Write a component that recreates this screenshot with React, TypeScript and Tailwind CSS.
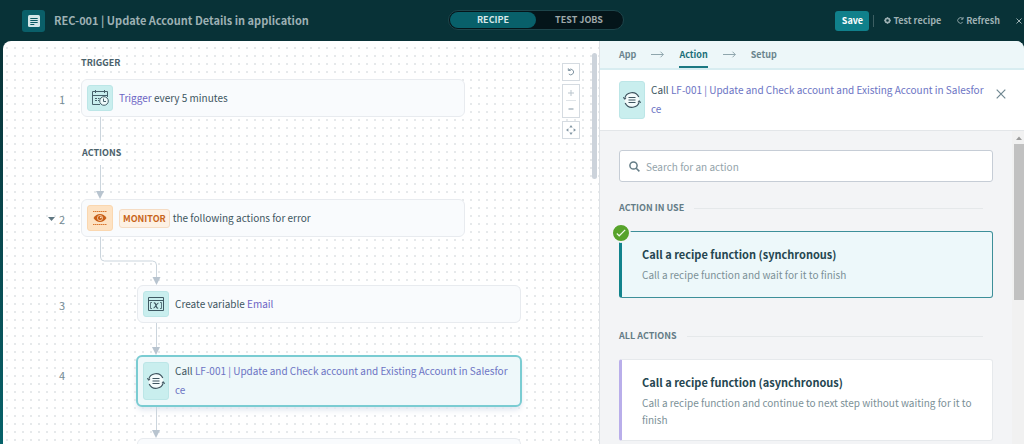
import type { ReactNode } from "react";

function RecipeIcon() {
  return (
    <svg viewBox="0 0 12 12" className="size-3" aria-hidden="true">
      <rect x="0" y="0" width="12" height="12" rx="1.5" fill="#d3e6e8" />
      <path d="M2.3 3.5h7.4M2.3 5.5h7.4M2.3 7.5h7.4M2.3 9.5h4" stroke="#0a5a63" strokeWidth="1" />
    </svg>
  );
}

function CalendarIcon() {
  return (
    <svg viewBox="0 0 18 18" className="size-[18px]" fill="none" stroke="#47616b" aria-hidden="true">
      <path d="M9 15.5H1.500V2.500H16.500V8" />
      <path d="M1.500 6.500h15" />
      <path d="M4.500 1v3M13.500 1v3" />
      <path d="M4 9.500h2M7 9.500h1.500M4 11.500h2M7 11.500h1" />
      <circle cx="13" cy="12" r="4.300" fill="#eefafa" />
      <path d="M12.500 9.500v3h2.500" />
    </svg>
  );
}

function MonitorIcon() {
  return (
    <svg viewBox="0 0 16 16" className="size-4" aria-hidden="true">
      <path d="M1 1.500h14M1 14.500h14" stroke="#d9772f" strokeWidth="1" strokeDasharray="1.500 .500" />
      <path d="M1.500 8C3.200 5.200 5.400 4 8 4s4.800 1.200 6.500 4c-1.700 2.800-3.900 4-6.500 4S3.200 10.800 1.500 8Z" fill="#c95f17" />
      <circle cx="8" cy="8" r="2.600" fill="none" stroke="#fde3c5" strokeWidth=".700" />
      <circle cx="8.800" cy="7.300" r=".900" fill="#fde3c5" />
    </svg>
  );
}

function VariableIcon() {
  return (
    <svg viewBox="0 0 18 16" className="h-4 w-[18px]" fill="none" stroke="#3f5963" aria-hidden="true">
      <path d="M1.500 1.500h15v13h-15z" />
      <path d="M1.500 4.500h15" />
      <path d="M5 6.500H3.500v6H5M13 6.500h1.500v6H13" strokeWidth=".800" />
      <path d="M6.800 7c1.200-.400 1.700.300 2.200 2.500s1 2.800 2.200 2.500M11.500 7C10 7 8 12 6.500 12" strokeWidth="1.200" />
    </svg>
  );
}

function FunctionIcon() {
  return (
    <svg viewBox="0 0 18 18" className="size-[18px]" fill="none" stroke="#3f5560" aria-hidden="true">
      <circle cx="9" cy="9" r="7.500" fill="#f3fbfb" stroke="none" />
      <path d="M1.600 8A7.500 7.500 0 0 1 15.800 6M16.400 10A7.500 7.500 0 0 1 2.200 12" strokeWidth="1.200" />
      <path d="M.300 6.200 1.600 8.300 3.200 7.200M17.700 11.800 16.400 9.700 14.800 10.800" />
      <path d="M5.500 6.500h7M5.500 9h7M5.500 11.500h7" />
    </svg>
  );
}

function IconTile({ tall, orange, children }: { tall?: boolean; orange?: boolean; children: ReactNode }) {
  return (
    <span
      className={`flex w-[26px] shrink-0 items-center justify-center rounded-[3px] border ${
        tall ? "h-[38px]" : "h-[26px]"
      } ${orange ? "border-[#fad7b0] bg-[#fde2c3]" : "border-[#bce6e7] bg-[#c9eeee]"}`}
    >
      {children}
    </span>
  );
}

function ArrowDown() {
  return (
    <svg viewBox="0 0 8 8" className="size-2" aria-hidden="true">
      <path d="M0 0h8L4 8Z" fill="#b8c4cf" />
    </svg>
  );
}

function Connector({ height, nested, arrow = true }: { height: string; nested?: boolean; arrow?: boolean }) {
  return (
    <div className={`flex w-2 flex-col items-center ${height} ${nested ? "ml-[149px]" : "ml-[93px]"}`}>
      <span className="w-px flex-1 bg-[#cbd5dd]" />
      {arrow && <ArrowDown />}
    </div>
  );
}

function Step({
  number,
  nested,
  collapsible,
  children,
}: {
  number?: number;
  nested?: boolean;
  collapsible?: boolean;
  children: ReactNode;
}) {
  return (
    <li className="flex items-start">
      <div className="flex h-10 w-[62px] shrink-0 items-center justify-end gap-1 text-[11px] text-[#758b95]">
        {collapsible && (
          <button type="button" aria-label="Collapse step" className="p-0">
            <svg viewBox="0 0 7 4" className="h-1 w-[7px]" aria-hidden="true">
              <path d="M0 0h7L3.500 4Z" fill="#5f7782" />
            </svg>
          </button>
        )}
        {number}
      </div>
      <div className={nested ? "ml-[72px] w-[384px]" : "ml-4 w-[384px]"}>{children}</div>
    </li>
  );
}

const plainCard =
  "flex h-[38px] w-full items-center gap-1.5 rounded-md border border-[#e8ebef] bg-[#f9fbfd] px-[5px] text-left text-[10px] leading-[19px] text-[#3d5560]";

function Title() {
  return (
    <>
      Call <span className="text-[#6c74c4]">LF-001 | Update and Check account and Existing Account in Salesforce</span>
    </>
  );
}

function Canvas() {
  return (
    <main className="relative min-w-0 flex-1 overflow-hidden rounded-tl-lg border-r border-[#dde1e5] bg-white bg-[radial-gradient(circle,#e6e9eb_1px,transparent_1px)] bg-[length:8px_8px] bg-[position:0_3px]">
      <ol className="pt-3">
        <li className="pb-[6px] pl-[78px] text-[9px] font-bold leading-[20px] text-[#4a616b]">TRIGGER</li>
        <Step number={1}>
          <button type="button" className={plainCard}>
            <IconTile>
              <CalendarIcon />
            </IconTile>
            <span className="pb-0.5">
              <span className="text-[#6c63c4]">Trigger</span> every 5 minutes
            </span>
          </button>
        </Step>
        <li className="-mt-0.5">
          <Connector height="h-6" arrow={false} />
          <div className="pl-[79px] text-[9px] font-bold leading-6 text-[#4a616b]">ACTIONS</div>
          <Connector height="h-[34px]" />
        </li>
        <Step number={2} collapsible>
          <button type="button" className={plainCard}>
            <IconTile orange>
              <MonitorIcon />
            </IconTile>
            <span className="flex items-center gap-[3px]">
              <span className="rounded-[3px] border border-[#f5dcc4] bg-[#fdf1e4] px-[3px] text-[9px] font-bold leading-[17px] text-[#c8651b]">
                MONITOR
              </span>
              <span className="pb-0.5">the following actions for error</span>
            </span>
          </button>
        </Step>
        <li className="-mt-0.5 h-12 pl-[97px]">
          <svg viewBox="0 0 61 48" className="h-12 w-[61px]" fill="none" aria-hidden="true">
            <path d="M.500 0V20a4 4 0 0 0 4 4H52.500a4 4 0 0 1 4 4V42" stroke="#cbd5dd" />
            <path d="M52.500 40h8l-4 8Z" fill="#b8c4cf" />
          </svg>
        </li>
        <Step number={3} nested>
          <button type="button" className={plainCard}>
            <IconTile>
              <VariableIcon />
            </IconTile>
            <span className="pb-0.5">
              Create variable <span className="text-[#6c63c4]">Email</span>
            </span>
          </button>
        </Step>
        <li className="-mt-0.5">
          <Connector height="h-8" nested />
        </li>
        <Step number={4} nested>
          <button
            type="button"
            aria-current="step"
            className="-mx-px flex w-[386px] items-center gap-1.5 rounded-md border-2 border-[#7accd2] bg-[#eef8fa] px-[5px] py-1 text-left text-[10px] leading-[19px] text-[#3d5560] shadow-md shadow-slate-200"
          >
            <IconTile tall>
              <FunctionIcon />
            </IconTile>
            <span className="min-w-0 flex-1 break-all pb-0.5 pr-1">
              <Title />
            </span>
          </button>
        </Step>
        <li>
          <Connector height="h-[31px]" nested />
        </li>
        <Step nested>
          <div className={plainCard} />
        </Step>
      </ol>

      <div className="absolute right-[19px] top-[22px] flex w-[18px] flex-col gap-[3px] text-[#8296a3]">
        <button type="button" aria-label="Undo" className="flex h-[18px] items-center justify-center border border-[#d5dbe1] bg-white">
          <svg viewBox="0 0 10 10" className="size-2.5" fill="none" stroke="currentColor" aria-hidden="true">
            <path d="M2.800 3A2.800 2.800 0 1 1 2.800 7M2.300 1.300v2.200h2.400" />
          </svg>
        </button>
        <div className="flex flex-col border border-[#d5dbe1] bg-white">
          <button type="button" aria-label="Zoom in" className="mx-[3px] flex h-4 items-center justify-center border-b border-[#dfe4e8] text-[#b9c4cc]">
            <svg viewBox="0 0 6 6" className="size-1.5" stroke="currentColor" aria-hidden="true">
              <path d="M0 3h6M3 0v6" />
            </svg>
          </button>
          <button type="button" aria-label="Zoom out" className="flex h-4 items-center justify-center">
            <svg viewBox="0 0 6 6" className="size-1.5" stroke="currentColor" aria-hidden="true">
              <path d="M.500 3h5" strokeWidth="1.200" />
            </svg>
          </button>
        </div>
        <button type="button" aria-label="Fit to screen" className="flex h-[18px] items-center justify-center border border-[#d5dbe1] bg-white">
          <svg viewBox="0 0 10 10" className="size-2.5" fill="currentColor" aria-hidden="true">
            <path d="M5 0 6.700 2.400H3.300ZM5 10 3.300 7.600h3.400ZM0 5l2.400-1.700v3.400ZM10 5 7.600 6.700V3.300Z" />
          </svg>
        </button>
      </div>
      <div className="absolute right-[2px] top-3 h-[126px] w-[5px] rounded-full bg-[#ccd3db]" />
    </main>
  );
}

function StepArrow() {
  return (
    <svg viewBox="0 0 13 7" className="h-[7px] w-[13px]" fill="none" stroke="#8fa6ad" aria-hidden="true">
      <path d="M0 3.500h12.300M9.500.700l2.800 2.800-2.800 2.800" />
    </svg>
  );
}

function SectionTitle({ children }: { children: ReactNode }) {
  return (
    <h2 className="flex items-center gap-2.5 pr-2.5 text-[9px] font-bold leading-4 text-[#647c86]">
      {children}
      <span className="h-px flex-1 bg-[#e5e8ea]" />
    </h2>
  );
}

function ActionPanel() {
  return (
    <aside className="flex w-[424px] shrink-0 flex-col overflow-hidden rounded-tr-lg bg-[#f3f4f6]">
      <nav className="flex h-[29px] shrink-0 items-stretch gap-[15px] border-b-2 border-[#d8edf1] bg-[#edf7f9] pl-[19px] text-[9px] font-bold text-[#6b858e]">
        <button type="button">App</button>
        <span className="flex items-center">
          <StepArrow />
        </span>
        <button type="button" aria-current="step" className="border-b-2 border-[#1b7882] pt-0.5 text-[#1b6f7a]">
          Action
        </button>
        <span className="flex items-center">
          <StepArrow />
        </span>
        <button type="button">Setup</button>
      </nav>
      <header className="flex h-[61px] shrink-0 items-center gap-1.5 border-b border-[#e3e6e9] bg-white pl-[19px] pr-[18px] text-[10px] leading-[19px] text-[#3d5560]">
        <IconTile tall>
          <FunctionIcon />
        </IconTile>
        <h1 className="min-w-0 flex-1 break-all pb-0.5">
          <Title />
        </h1>
        <button type="button" aria-label="Close panel" className="-mt-3 ml-1.5">
          <svg viewBox="0 0 10 10" className="size-2.5" stroke="#6f8791" strokeWidth="1.200" aria-hidden="true">
            <path d="M.700.700 9.300 9.300M9.300.700.700 9.300" />
          </svg>
        </button>
      </header>
      <div className="flex min-h-0 flex-1">
        <div className="min-w-0 flex-1 overflow-hidden px-[19px] pt-[19px]">
          <label className="flex h-8 items-center gap-1.5 rounded-[3px] border border-[#c6cdd6] bg-white px-[9px]">
            <svg viewBox="0 0 11 11" className="size-[11px]" fill="none" stroke="#647c86" strokeWidth="1.500" aria-hidden="true">
              <circle cx="4.500" cy="4.500" r="3.600" />
              <path d="m7.200 7.200 3.200 3.200" />
            </svg>
            <input
              type="search"
              aria-label="Search for an action"
              placeholder="Search for an action"
              className="min-w-0 flex-1 bg-transparent text-[10px] text-[#3d5560] outline-none placeholder:text-[#93a3aa]"
            />
          </label>

          <section className="pt-[18px]">
            <SectionTitle>ACTION IN USE</SectionTitle>
            <button
              type="button"
              className="relative mt-[15px] block w-full rounded-[3px] border border-l-[3px] border-[#3d8f99] border-l-[#12838c] bg-[#edf8fa] px-5 pb-3.5 pt-3 text-left"
            >
              <span className="absolute -left-[11px] -top-[9px] flex size-5 items-center justify-center rounded-full border-2 border-[#f3f4f6] bg-[#57a32b]">
                <svg viewBox="0 0 10 8" className="h-2 w-2.5" fill="none" stroke="#eef8e8" strokeWidth="1.200" aria-hidden="true">
                  <path d="M.800 4.500 3.200 6.800 9.200.900" />
                </svg>
              </span>
              <span className="block text-[11px] font-bold leading-5 text-[#254650]">Call a recipe function (synchronous)</span>
              <span className="mt-0.5 block text-[10px] leading-[17px] text-[#7b9097]">Call a recipe function and wait for it to finish</span>
            </button>
          </section>

          <section className="pt-[30px]">
            <SectionTitle>ALL ACTIONS</SectionTitle>
            <button
              type="button"
              className="mt-[15px] block w-full rounded-[3px] border border-l-[3px] border-[#e6e9ec] border-l-[#b9aeea] bg-white pb-3 pl-5 pr-4 pt-3 text-left"
            >
              <span className="block text-[11px] font-bold leading-5 text-[#254650]">Call a recipe function (asynchronous)</span>
              <span className="mt-0.5 block text-[10px] leading-[17px] text-[#7b9097]">
                Call a recipe function and continue to next step without waiting for it to finish
              </span>
            </button>
          </section>
        </div>
        <div className="flex w-3 shrink-0 flex-col items-end bg-[#f1f1f1]">
          <svg viewBox="0 0 10 13" className="h-[13px] w-2.5" aria-hidden="true">
            <path d="M2 9h6L5 5.500Z" fill="#9b9b9b" />
          </svg>
          <span className="h-[156px] w-2.5 bg-[#c1c1c1]" />
        </div>
      </div>
    </aside>
  );
}

function TopBar() {
  return (
    <header className="relative flex h-[41px] shrink-0 items-center pl-[22px] pr-[2px] text-[#9db0b3]">
      <span className="flex h-[22px] w-[23px] items-center justify-center rounded-[3px] bg-[#0a5f69]">
        <RecipeIcon />
      </span>
      <span className="ml-[9px] text-[11px] font-bold">REC-001 | Update Account Details in application</span>
      <div className="absolute left-1/2 top-[10px] ml-[-64px] flex h-5 w-[176px] rounded-full border border-[#1d454b] bg-[#04151a] p-px text-[9px] font-bold">
        <button type="button" className="w-[86px] rounded-full bg-[#08606a] text-[#dbe9ea]">
          RECIPE
        </button>
        <button type="button" className="flex-1 text-[#9fa8aa]">
          TEST JOBS
        </button>
      </div>
      <div className="ml-auto flex items-center text-[9px] font-bold">
        <button type="button" className="h-5 w-[34px] rounded-[3px] bg-[#10808b] text-white">
          Save
        </button>
        <span className="ml-1 h-3 w-px bg-[#3d5f63]" />
        <button type="button" className="ml-2.5 flex items-center gap-0.5">
          <svg viewBox="0 0 8 8" className="size-[7px]" fill="none" stroke="currentColor" strokeWidth="2" aria-hidden="true">
            <circle cx="4" cy="4" r="2.500" />
            <path d="M4 0v1M4 7v1M0 4h1M7 4h1" strokeWidth="1" />
          </svg>
          Test recipe
        </button>
        <button type="button" className="ml-4 flex items-center gap-0.5">
          <svg viewBox="0 0 8 8" className="size-[7px]" fill="none" stroke="currentColor" aria-hidden="true">
            <path d="M6.500 6A3.200 3.200 0 1 1 6.600 2M6.900 0v2.500H4.500" />
          </svg>
          Refresh
        </button>
        <button type="button" aria-label="Close" className="ml-4">
          <svg viewBox="0 0 6 6" className="size-1.5" stroke="currentColor" aria-hidden="true">
            <path d="M.500.500 5.500 5.500M5.500.500.500 5.500" />
          </svg>
        </button>
      </div>
    </header>
  );
}

export default function App() {
  return (
    <div className="flex h-screen flex-col overflow-hidden bg-linear-to-b from-[#083237] from-10% to-[#07626a] font-['Noto_Sans_CJK_SC',sans-serif]">
      <TopBar />
      <div className="flex min-h-0 flex-1 pl-[3px]">
        <Canvas />
        <ActionPanel />
      </div>
    </div>
  );
}
